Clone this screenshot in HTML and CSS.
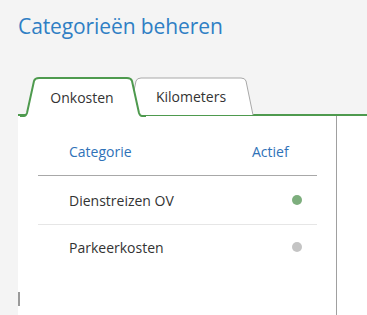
FILE: index.html
```html
<!DOCTYPE html>
<html lang="nl">
<head>
<meta charset="utf-8">
<title>Categorieën beheren</title>
<link rel="stylesheet" href="styles.css">
</head>
<body>
<h1 class="title">Categorieën beheren</h1>
<div class="tabs">
  <div class="tab tab-active">
    <svg class="tab-shape" viewBox="0 0 126 40" preserveAspectRatio="none">
      <path d="M0,39 L4,39 Q6,39 7,36 L14,4 Q15,1 19,1 L107,1 Q111,1 112,4 L119,36 Q120,39 122,39 L126,39" fill="#fff" stroke="#4e9a4e" stroke-width="2"/>
    </svg>
    <span class="tab-label">Onkosten</span>
  </div>
  <div class="tab tab-inactive">
    <svg class="tab-shape" viewBox="0 0 130 38" preserveAspectRatio="none">
      <path d="M3,38 L10,4 Q11,1 15,1 L115,1 Q119,1 120,4 L127,38" fill="#fff" stroke="#a8a8a8" stroke-width="1"/>
    </svg>
    <span class="tab-label">Kilometers</span>
  </div>
</div>
<div class="panel">
  <div class="content">
    <div class="row head">
      <span class="name">Categorie</span>
      <span class="state">Actief</span>
    </div>
    <div class="row">
      <span class="name">Dienstreizen OV</span>
      <span class="state"><span class="dot on"></span></span>
    </div>
    <div class="row">
      <span class="name">Parkeerkosten</span>
      <span class="state"><span class="dot off"></span></span>
    </div>
  </div>
</div>
</body>
</html>
```
FILE: styles.css
```css
html, body {
  margin: 0;
  padding: 0;
  height: 100%;
}
body {
  background: #f4f4f4;
  font-family: "Open Sans", "Noto Sans", sans-serif;
  color: #333;
  overflow: hidden;
}
.title {
  margin: 0;
  padding: 12px 0 0 18px;
  height: 38px;
  font-size: 21px;
  font-weight: 400;
  color: #2f7fc4;
  line-height: 28px;
  letter-spacing: -0.1px;
}
.tabs {
  display: flex;
  margin-top: 27px;
  padding-left: 8px;
  margin-left: 18px;
  height: 37px;
  border-bottom: 2px solid #4e9a4e;
}
.tab {
  position: relative;
  display: flex;
  align-items: center;
  justify-content: center;
  font-size: 14px;
}
.tab-shape {
  position: absolute;
  left: 0;
  top: 0;
  width: 100%;
  height: 100%;
  z-index: 0;
}
.tab-label {
  position: relative;
  z-index: 1;
}
.tab-active {
  width: 126px;
  margin-left: -6px;
  margin-bottom: -2px;
  z-index: 2;
  height: 40px;
}
.tab-active .tab-label {
  padding-top: 1px;
  margin-left: -2px;
}
.tab-inactive {
  width: 130px;
  margin-left: -20px;
  z-index: 1;
  align-self: flex-end;
  height: 38px;
  margin-bottom: -1px;
}
.tab-inactive .tab-label {
  margin-top: 1px;
}
.panel {
  position: relative;
  margin-left: 18px;
  background: #fff;
  height: 200px;
}
.panel::after {
  content: "";
  position: absolute;
  left: 0;
  top: 176px;
  width: 2px;
  height: 14px;
  background: #9a9a9a;
}
.content {
  width: 319px;
  box-sizing: border-box;
  border-right: 1px solid #a0a0a0;
  height: 100%;
  padding: 22px 19px 0 20px;
}
.row {
  display: flex;
  align-items: center;
  box-sizing: border-box;
  height: 49px;
  padding-left: 31px;
  font-size: 14px;
  border-bottom: 1px solid #e6e6e6;
}
.row:last-child {
  border-bottom: none;
  padding-bottom: 4px;
}
.row.head {
  height: 38px;
  padding-top: 4px;
  border-bottom: 1px solid #a8a8a8;
  color: #2f72b8;
  align-items: flex-start;
}
.name { flex: 1; }
.state {
  width: 65px;
  display: flex;
  box-sizing: border-box;
  justify-content: flex-end;
  padding-right: 15px;
}
.row.head .state {
  justify-content: flex-start;
  padding-right: 0;
}
.dot {
  width: 10px;
  height: 10px;
  border-radius: 50%;
  display: block;
  margin-top: -1px;
}
.dot.on { background: #7dae7d; }
.dot.off { background: #c4c4c4; }
```
